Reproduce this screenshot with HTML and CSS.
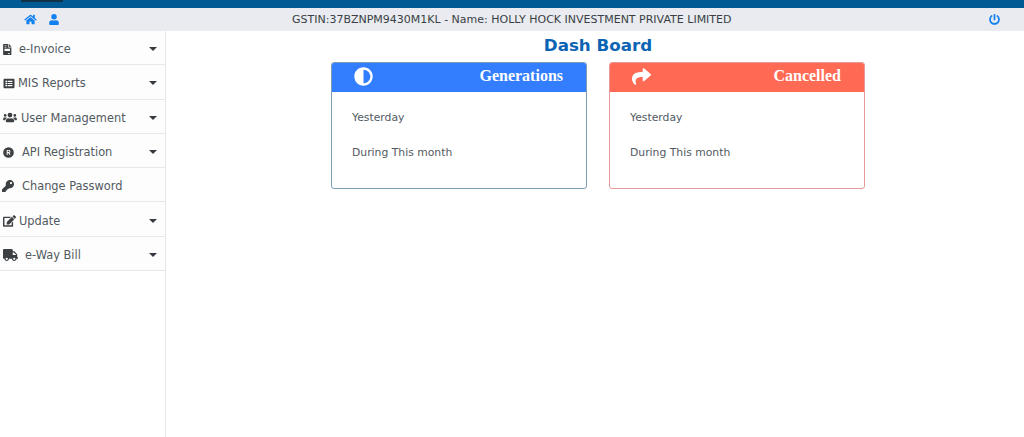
FILE: index.html
```html
<!DOCTYPE html>
<html lang="en">
<head>
<meta charset="utf-8">
<title>Dash Board</title>
<link rel="stylesheet" href="styles.css">
</head>
<body>
<div class="topstrip"><span class="emblem-text"></span></div>
<header class="header">
  <div class="header-left">
    <svg class="hicon home" viewBox="0 0 576 512"><path d="M280.4 148.3L96 300.1V464a16 16 0 0 0 16 16l112-.3a16 16 0 0 0 15.9-16V368a16 16 0 0 1 16-16h64a16 16 0 0 1 16 16v95.6a16 16 0 0 0 16 16.1l112 .3a16 16 0 0 0 16-16V300L295.7 148.3a12.2 12.2 0 0 0-15.3 0zM571.6 251.5L488 182.6V44a12 12 0 0 0-12-12h-56a12 12 0 0 0-12 12v72.6L318.5 43a48 48 0 0 0-61 0L4.3 251.5a12 12 0 0 0-1.6 16.9l25.5 31A12 12 0 0 0 45.2 301l235.2-193.7a12.2 12.2 0 0 1 15.3 0L530.9 301a12 12 0 0 0 16.9-1.6l25.5-31a12 12 0 0 0-1.7-16.9z"/></svg>
    <svg class="hicon user" viewBox="0 0 448 512"><path d="M224 256a128 128 0 1 0 0-256 128 128 0 0 0 0 256zm89.6 32h-16.7a174.100 174.100 0 0 1-145.800 0h-16.700A134.400 134.400 0 0 0 0 422.400V464a48 48 0 0 0 48 48h352a48 48 0 0 0 48-48v-41.600A134.400 134.400 0 0 0 313.600 288z"/></svg>
  </div>
  <div class="header-title">GSTIN:37BZNPM9430M1KL - Name: HOLLY HOCK INVESTMENT PRIVATE LIMITED</div>
  <svg class="hicon power" viewBox="0 0 512 512"><path d="M400 54.100c63 45 104 118.600 104 201.900 0 136.800-110.800 247.700-247.500 248C120 504.300 8.200 393 8 256.400 7.900 173.100 48.900 99.300 111.800 54.200c11.700-8.300 28-4.800 35 7.700L162.600 90c5.900 10.500 3.100 23.800-6.600 31-41.500 30.800-68 79.600-68 134.900-.1 92.300 74.500 168.100 168 168.100 91.600 0 168.600-74.200 168-169.100-.3-51.800-24.700-101.800-68.100-134-9.700-7.200-12.400-20.500-6.500-30.900l15.800-28.100c7-12.400 23.200-16.100 34.800-7.800zM296 264V24c0-13.300-10.700-24-24-24h-32c-13.300 0-24 10.700-24 24v240c0 13.300 10.700 24 24 24h32c13.300 0 24-10.700 24-24z"/></svg>
</header>
<div class="layout">
  <nav class="sidebar">
    <a class="item">
      <svg class="ic ic-invoice" viewBox="0 0 384 512"><path d="M224 136V0H24C10.700 0 0 10.700 0 24v464c0 13.300 10.700 24 24 24h336c13.300 0 24-10.700 24-24V160H248c-13.200 0-24-10.800-24-24zM64 72c0-4.400 3.600-8 8-8h80c4.400 0 8 3.600 8 8v16c0 4.400-3.600 8-8 8H72c-4.400 0-8-3.600-8-8V72zm0 64c0-4.400 3.600-8 8-8h80c4.400 0 8 3.600 8 8v16c0 4.400-3.600 8-8 8H72c-4.400 0-8-3.600-8-8v-16zm256 304c0 4.400-3.600 8-8 8h-80c-4.400 0-8-3.600-8-8v-16c0-4.400 3.600-8 8-8h80c4.400 0 8 3.600 8 8v16zM64 224h256v96H64v-96zM377 105L279.100 7c-4.500-4.500-10.600-7-17-7H256v128h128v-6.100c0-6.300-2.500-12.400-7-16.900z"/></svg>
      <span class="label l-invoice">e-Invoice</span><i class="caret"></i>
    </a>
    <a class="item">
      <svg class="ic ic-mis" viewBox="0 0 512 512"><path d="M464 480H48c-26.500 0-48-21.500-48-48V80c0-26.500 21.500-48 48-48h416c26.500 0 48 21.500 48 48v352c0 26.500-21.500 48-48 48zM128 120a40 40 0 1 0 0 80 40 40 0 0 0 0-80zm0 96a40 40 0 1 0 0 80 40 40 0 0 0 0-80zm0 96a40 40 0 1 0 0 80 40 40 0 0 0 0-80zm288-136v-32c0-6.600-5.400-12-12-12H204c-6.600 0-12 5.400-12 12v32c0 6.600 5.400 12 12 12h200c6.600 0 12-5.400 12-12zm0 96v-32c0-6.600-5.400-12-12-12H204c-6.600 0-12 5.400-12 12v32c0 6.600 5.400 12 12 12h200c6.600 0 12-5.400 12-12zm0 96v-32c0-6.600-5.400-12-12-12H204c-6.600 0-12 5.400-12 12v32c0 6.600 5.400 12 12 12h200c6.600 0 12-5.400 12-12z"/></svg>
      <span class="label l-mis">MIS Reports</span><i class="caret"></i>
    </a>
    <a class="item">
      <svg class="ic ic-users" viewBox="0 0 640 512"><path d="M96 224a64 64 0 1 0 0-128 64 64 0 0 0 0 128zm448 0a64 64 0 1 0 0-128 64 64 0 0 0 0 128zm32 32h-64c-17.600 0-33.500 7.100-45.100 18.600 40.300 22.100 68.900 62 75.100 109.400h66c17.700 0 32-14.300 32-32v-32c0-35.300-28.700-64-64-64zm-256 0a112 112 0 1 0 0-224 112 112 0 0 0 0 224zm76.800 32h-8.300c-20.800 10-43.900 16-68.500 16s-47.600-6-68.500-16h-8.300C179.600 288 128 339.600 128 403.200V432c0 26.500 21.500 48 48 48h288c26.500 0 48-21.500 48-48v-28.800c0-63.600-51.600-115.200-115.200-115.200zm-223.700-13.400C161.500 263.100 145.600 256 128 256H64c-35.300 0-64 28.700-64 64v32c0 17.700 14.300 32 32 32h65.900c6.300-47.400 34.900-87.300 75.200-109.400z"/></svg>
      <span class="label l-users">User Management</span><i class="caret"></i>
    </a>
    <a class="item">
      <svg class="ic ic-api" viewBox="0 0 512 512"><path d="M256 8a248 248 0 1 0 0 496 248 248 0 0 0 0-496zM346 376h-42l-56-98h-32v98h-44V136h94c50 0 82 30 82 72 0 32-17 54-44 64zm-130-138h46c24 0 40-12 40-30s-16-32-40-32h-46z"/></svg>
      <span class="label l-api">API Registration</span><i class="caret"></i>
    </a>
    <a class="item">
      <svg class="ic ic-key" viewBox="0 0 512 512"><path d="M512 176a176 176 0 0 1-209 173l-24 27a24 24 0 0 1-18 8h-37v40a24 24 0 0 1-24 24h-40v40a24 24 0 0 1-24 24H24a24 24 0 0 1-24-24v-78a24 24 0 0 1 7-17l162-162A176 176 0 1 1 512 176zm-176-48a48 48 0 1 0 96 0 48 48 0 0 0-96 0z"/></svg>
      <span class="label l-key">Change Password</span>
    </a>
    <a class="item">
      <svg class="ic ic-edit" viewBox="0 0 576 512"><path d="M402.600 83.200l90.200 90.200c3.800 3.800 3.800 10 0 13.800L274.400 405.600l-92.800 10.300c-12.400 1.400-22.900-9.100-21.500-21.500l10.300-92.800L388.800 83.200c3.800-3.800 10-3.800 13.800 0zm162-22.900l-48.800-48.800c-15.200-15.200-39.900-15.200-55.200 0l-35.400 35.400c-3.800 3.800-3.800 10 0 13.800l90.200 90.200c3.800 3.800 10 3.800 13.800 0l35.400-35.400c15.200-15.300 15.200-40 0-55.200zM384 346.200V448H64V128h229.800c3.200 0 6.200-1.300 8.500-3.500l40-40c7.600-7.600 2.200-20.500-8.500-20.500H48C21.500 64 0 85.500 0 112v352c0 26.500 21.500 48 48 48h352c26.500 0 48-21.500 48-48V306.200c0-10.700-12.900-16-20.500-8.500l-40 40c-2.200 2.300-3.500 5.300-3.500 8.500z"/></svg>
      <span class="label l-edit">Update</span><i class="caret"></i>
    </a>
    <a class="item">
      <svg class="ic ic-truck" viewBox="0 0 640 512"><path d="M624 352h-16V243.900c0-12.700-5.100-24.900-14.100-33.900L494 110.100c-9-9-21.200-14.100-33.900-14.100H416V48c0-26.500-21.500-48-48-48H48C21.500 0 0 21.500 0 48v320c0 26.500 21.500 48 48 48h16c0 53 43 96 96 96s96-43 96-96h128c0 53 43 96 96 96s96-43 96-96h48c8.800 0 16-7.200 16-16v-32c0-8.800-7.200-16-16-16zM160 464a48 48 0 1 1 0-96 48 48 0 0 1 0 96zm320 0a48 48 0 1 1 0-96 48 48 0 0 1 0 96zm80-208H416V144h44.100l99.900 99.900V256z"/></svg>
      <span class="label l-truck">e-Way Bill</span><i class="caret"></i>
    </a>
  </nav>
  <main class="main">
    <h1 class="page-title">Dash Board</h1>
    <div class="cards">
      <section class="card card-blue">
        <div class="card-head">
          <svg class="card-icon" viewBox="0 0 512 512"><path d="M8 256c0 136.967 111.033 248 248 248s248-111.033 248-248S392.967 8 256 8 8 119.033 8 256zm248 184V72c101.705 0 184 82.311 184 184 0 101.705-82.311 184-184 184z"/></svg>
          <span class="card-title">Generations</span>
        </div>
        <div class="card-body"><p>Yesterday</p><p>During This month</p></div>
      </section>
      <section class="card card-red">
        <div class="card-head">
          <svg class="card-icon" viewBox="0 0 512 512"><path d="M503.700 189.800L327.700 37.900C312.300 24.500 288 35.300 288 56v80.100C127.400 137.900 0 170.100 0 322.300c0 61.400 39.600 122.300 83.300 154.100 13.700 9.900 33.100-2.500 28.100-18.600C66 312.900 132.900 274.300 288 272.100V360c0 20.700 24.300 31.500 39.700 18.200l176-152c11.100-9.600 11.100-26.800 0-36.400z"/></svg>
          <span class="card-title">Cancelled</span>
        </div>
        <div class="card-body"><p>Yesterday</p><p>During This month</p></div>
      </section>
    </div>
  </main>
</div>
</body>
</html>
```
FILE: styles.css
```css
* { box-sizing: border-box; }
html, body { margin: 0; height: 100%; }
body {
  font-family: "DejaVu Sans", Verdana, sans-serif;
  font-size: 11px;
  color: #343a40;
  background: #fff;
  overflow: hidden;
  height: 437px;
  display: flex;
  flex-direction: column;
}
.topstrip {
  height: 8px;
  background: #005b94;
  flex: none;
  padding-left: 21px;
  overflow: hidden;
}
.emblem-text {
  display: block;
  width: 42px;
  height: 2px;
  background: #123048;
  filter: blur(.5px);
}
.header {
  height: 23px;
  flex: none;
  background: #e9ebf0;
  display: flex;
  align-items: center;
  padding: 0 24px;
}
.header-left { display: flex; align-items: center; gap: 12px; width: 245px; flex: none; }
.hicon { fill: #1380f0; display: block; flex: none; }
.home { width: 13px; height: 11px; }
.user { width: 10px; height: 11px; }
.power { width: 11px; height: 11px; margin-left: auto; }
.header-title { font-size: 11px; color: #3a3f44; white-space: nowrap; margin-left: 23px; }
.layout { flex: 1; display: flex; min-height: 0; }
.sidebar {
  width: 166px;
  flex: none;
  border-right: 1px solid #e6e8ea;
  background: #fff;
}
.item {
  height: 34.3px;
  border-bottom: 1px solid #e6e8ea;
  background: #fdfdfd;
  display: flex;
  align-items: center;
  padding: 3px 8px 0 3px;
  color: #525a61;
  font-size: 11.4px;
  white-space: nowrap;
}
.ic { fill: #3c4043; display: block; flex: none; height: 11px; }
.ic-invoice { width: 8.500px; }
.ic-mis { width: 12px; }
.ic-users { width: 14px; }
.ic-api { width: 11px; }
.ic-key { width: 12px; margin-left: -1px; height: 12px; }
.ic-edit { width: 13px; height: 12px; }
.ic-truck { width: 15px; height: 12px; }
.l-invoice { margin-left: 7.500px; }
.l-mis { margin-left: 3px; }
.l-users { margin-left: 4px; }
.l-api { margin-left: 8px; }
.l-key { margin-left: 8px; }
.l-edit { margin-left: 3px; }
.l-truck { margin-left: 7px; }
.caret {
  margin-left: auto;
  width: 0;
  height: 0;
  border-left: 4px solid transparent;
  border-right: 4px solid transparent;
  border-top: 4px solid #343a40;
}
.main { flex: 1; display: flex; flex-direction: column; align-items: center; padding-left: 6px; }
.page-title {
  margin: 4px 0 6px;
  font-size: 16.700px;
  line-height: 21px;
  font-weight: 700;
  color: #0b63b3;
}
.cards { display: flex; gap: 22px; }
.card {
  width: 256px;
  height: 127px;
  background: #fff;
  border: 1px solid;
  border-radius: 3px;
  overflow: hidden;
}
.card-blue { border-color: #7d9db5; }
.card-red { border-color: #e79a9a; }
.card-head {
  height: 29px;
  display: flex;
  align-items: center;
  justify-content: space-between;
  padding: 0 23px 3px 22px;
  color: #fff;
}
.card-blue .card-head { background: #337eff; }
.card-red .card-head { background: #ff6a55; }
.card-icon { width: 19px; height: 19px; fill: #fff; display: block; }
.card-title { font-family: "Liberation Serif", serif; font-weight: 700; font-size: 16px; }
.card-body { padding: 19px 20px 0; }
.card-body p { margin: 0 0 21px; line-height: 13.5px; color: #525a61; font-size: 10.8px; }
```
